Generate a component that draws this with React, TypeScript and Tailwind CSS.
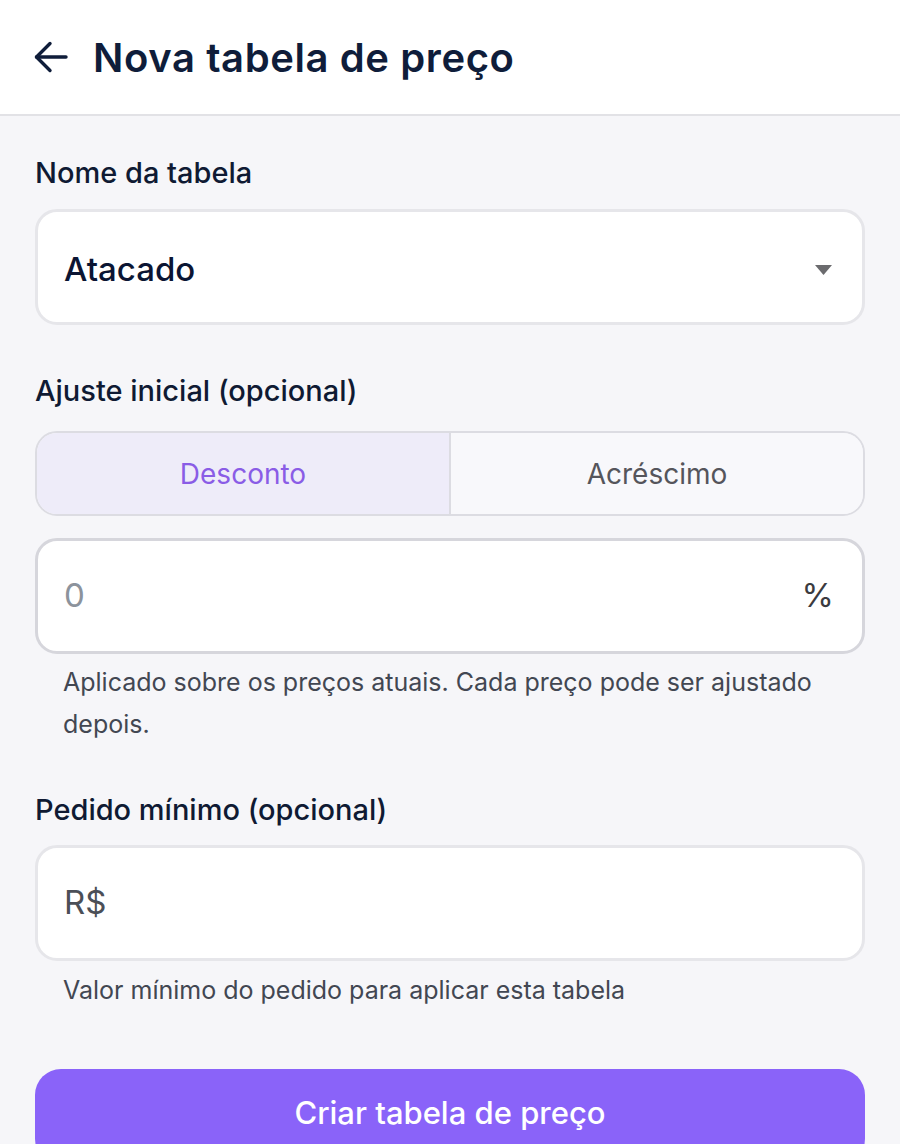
import React, { useState } from 'react';

const font = { fontFamily: 'Inter, "Noto Sans", sans-serif' };

const BackArrow = () => (
  <svg width="34" height="34" viewBox="0 0 34 34" fill="none" stroke="#0f1d3a" strokeWidth="3.4" strokeLinecap="round" strokeLinejoin="round">
    <path d="M32 17H2.5" />
    <path d="M16 3.5L2.5 17L16 30.5" />
  </svg>
);

export default function App() {
  const [mode, setMode] = useState<'desconto' | 'acrescimo'>('desconto');

  return (
    <div className="min-h-[1144px] w-[900px] bg-[#f6f6f9] overflow-hidden" style={font}>
      {/* Header */}
      <header className="h-[116px] bg-white border-b-2 border-[#e2e2e6] flex items-center pl-[34px] gap-[25px]">
        <BackArrow />
        <h1 className="text-[40px] font-semibold text-[#0f1d3a] tracking-[0.6px] leading-none mt-[2px]">
          Nova tabela de preço
        </h1>
      </header>

      <main className="px-[35px] pt-[39px]">
        {/* Nome da tabela */}
        <label className="block text-[29px] font-medium text-[#0f1a33] leading-[36px]">Nome da tabela</label>
        <div className="mt-[18px] h-[116px] bg-white rounded-[22px] border-[3px] border-[#e6e6ea] flex items-center justify-between pl-[26px] pr-[30px] pt-[5px]">
          <span className="text-[33px] font-medium text-[#0b1533]">Atacado</span>
          <svg width="17" height="10" viewBox="0 0 17 10">
            <path d="M0 0h17L8.5 10z" fill="#6b6b6e" />
          </svg>
        </div>

        {/* Ajuste inicial */}
        <label className="block mt-[48px] text-[29px] font-medium text-[#0f1a33] leading-[36px]">Ajuste inicial (opcional)</label>
        <div className="mt-[22px] h-[85px] rounded-[22px] border-2 border-[#dcdce2] flex overflow-hidden">
          <button
            onClick={() => setMode('desconto')}
            className={`flex-1 flex items-center justify-center text-[28px] border-r-2 border-[#dcdce2] ${
              mode === 'desconto' ? 'bg-[#eeecf9] text-[#8a5ce6]' : 'bg-[#f8f8fb] text-[#55555b]'
            }`}
          >
            Desconto
          </button>
          <button
            onClick={() => setMode('acrescimo')}
            className={`flex-1 flex items-center justify-center text-[28px] ${
              mode === 'acrescimo' ? 'bg-[#eeecf9] text-[#8a5ce6]' : 'bg-[#f8f8fb] text-[#55555b]'
            }`}
          >
            Acréscimo
          </button>
        </div>

        <div className="mt-[22px] h-[116px] bg-white rounded-[22px] border-[3px] border-[#d6d6dc] flex items-center justify-between pl-[26px] pr-[28px]">
          <span className="text-[33px] text-[#8c939c]">0</span>
          <span className="text-[33px] text-[#3b3b40]">%</span>
        </div>
        <p className="mt-[7px] pl-[28px] pr-[20px] text-[25px] leading-[42px] text-[#424752]">
          Aplicado sobre os preços atuais. Cada preço pode ser ajustado depois.
        </p>

        {/* Pedido mínimo */}
        <label className="block mt-[47px] text-[29px] font-medium text-[#0f1a33] leading-[36px]">Pedido mínimo (opcional)</label>
        <div className="mt-[17px] h-[116px] bg-white rounded-[22px] border-[3px] border-[#e6e6ea] flex items-center pl-[26px]">
          <span className="text-[33px] text-[#4b4f57]">R$</span>
        </div>
        <p className="mt-[8px] pl-[28px] text-[25px] leading-[42px] text-[#424752]">
          Valor mínimo do pedido para aplicar esta tabela
        </p>

        <button className="mt-[58px] w-full h-[96px] rounded-[26px] bg-[#8a63f9] text-white text-[31px] font-medium flex items-start justify-center pt-[21px]">
          Criar tabela de preço
        </button>
      </main>
    </div>
  );
}
